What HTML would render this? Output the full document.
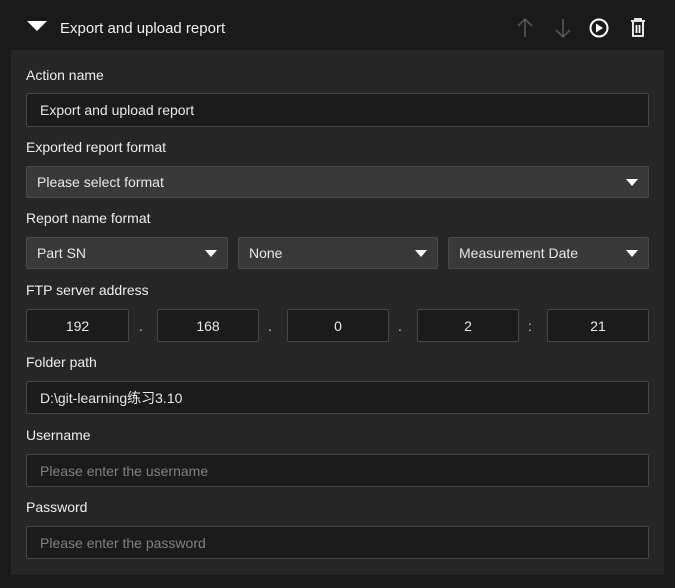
<!DOCTYPE html>
<html><head><style>
body{margin:0;width:675px;height:588px;background:#1a1a1a;font-family:"Liberation Sans","Noto Sans CJK SC",sans-serif;color:#e8e8e8;position:relative;overflow:hidden;font-size:14px}
.a{position:absolute;box-sizing:border-box}
.panel{left:11px;top:50px;width:653px;height:525px;background:#262626}
.lbl{left:26px;font-size:14px;color:#eee;line-height:18px}
.in{background:#1b1b1b;border:1px solid #464646;border-radius:2px;line-height:32px;padding-left:13px;font-size:14px}
.sel{background:#393939;border:1px solid #4a4a4a;border-radius:2px;line-height:31px;padding-left:10px}
.sel:after{content:"";position:absolute;right:10px;top:12px;border-left:6px solid transparent;border-right:6px solid transparent;border-top:7px solid #fff}
.ip{background:#1b1b1b;border:1px solid #464646;border-radius:2px;text-align:center;line-height:32px;top:309px;height:33px}
.dot{top:310px;line-height:33px;color:#ccc}
.ph{color:#808080}
</style></head><body>
<div class="a" style="left:27px;top:21px;border-left:10px solid transparent;border-right:10px solid transparent;border-top:10px solid #fff"></div>
<div class="a" style="left:60px;top:20px;font-size:15px;color:#f0f0f0">Export and upload report</div>
<svg class="a" style="left:514px;top:16px" width="140" height="24" viewBox="0 0 140 24">
<g fill="none" stroke="#555" stroke-width="1.6"><path d="M11 3v18M4 10l7-7 7 7"/><path d="M49 3v18M42 14l7 7 7-7"/></g>
<circle cx="85" cy="12" r="8.5" fill="none" stroke="#fff" stroke-width="2"/><path d="M82 7.5v9l7-4.5z" fill="#fff"/>
<g fill="none" stroke="#fff" stroke-width="1.8"><path d="M117 5h14M121 5V3h6v2M119 6v14h10V6"/><path d="M122.5 9v8M125.5 9v8"/></g>
</svg>
<div class="a panel"></div>
<div class="a lbl" style="top:66px">Action name</div>
<div class="a in" style="left:26px;top:93px;width:623px;height:34px">Export and upload report</div>
<div class="a lbl" style="top:138px">Exported report format</div>
<div class="a sel" style="left:26px;top:166px;width:623px;height:32px">Please select format</div>
<div class="a lbl" style="top:209px">Report name format</div>
<div class="a sel" style="left:26px;top:237px;width:202px;height:32px">Part SN</div>
<div class="a sel" style="left:238px;top:237px;width:200px;height:32px">None</div>
<div class="a sel" style="left:448px;top:237px;width:201px;height:32px">Measurement Date</div>
<div class="a lbl" style="top:281px">FTP server address</div>
<div class="a ip" style="left:26px;width:103px">192</div>
<div class="a dot" style="left:139px">.</div>
<div class="a ip" style="left:157px;width:102px">168</div>
<div class="a dot" style="left:268px">.</div>
<div class="a ip" style="left:287px;width:102px">0</div>
<div class="a dot" style="left:398px">.</div>
<div class="a ip" style="left:417px;width:102px">2</div>
<div class="a dot" style="left:528px">:</div>
<div class="a ip" style="left:547px;width:102px">21</div>
<div class="a lbl" style="top:353px">Folder path</div>
<div class="a in" style="left:26px;top:381px;width:623px;height:33px;padding-left:13px">D:\git-learning练习3.10</div>
<div class="a lbl" style="top:426px">Username</div>
<div class="a in ph" style="left:26px;top:454px;width:623px;height:33px">Please enter the username</div>
<div class="a lbl" style="top:498px">Password</div>
<div class="a in ph" style="left:26px;top:526px;width:623px;height:33px">Please enter the password</div>
</body></html>
